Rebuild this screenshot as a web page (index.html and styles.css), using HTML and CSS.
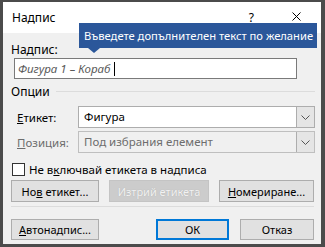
FILE: index.html
```html
<!DOCTYPE html>
<html lang="bg">

<head>
    <meta charset="UTF-8">
    <meta name="viewport" content="width=device-width, initial-scale=1.0">
    <title>Надпис</title>

    <link rel="stylesheet" href="styles.css">
</head>

<body>

    <div class="window">

        <div class="titlebar">
            <span class="title">Надпис</span>
            <span class="help">?</span>
            <svg class="close" width="9" height="9" viewBox="0 0 9 9">
                <path d="M0.5 0.5 L8.5 8.5 M8.5 0.5 L0.5 8.5" stroke="#000" stroke-width="1" fill="none" />
            </svg>
        </div>

        <div class="content">
            <div class="caption-label">Надпис:</div>
            <div class="caption-input">
                <span class="caption-text">Фигура 1 – Кораб</span><span class="cursor"></span>
            </div>

            <div class="group">
                <span>Опции</span>
                <div class="group-line"></div>
            </div>

            <div class="field">
                <label><u>Е</u>тикет:</label>
                <div class="select">
                    <span class="value">Фигура</span>
                    <span class="arrow">
                        <svg width="9" height="5" viewBox="0 0 9 5">
                            <path d="M0.5 0.5 L4.5 4.5 L8.5 0.5" stroke="#555" fill="none" />
                        </svg>
                    </span>
                </div>
            </div>

            <div class="field disabled">
                <label><u>П</u>озиция:</label>
                <div class="select">
                    <span class="value">Под избрания елемент</span>
                    <span class="arrow">
                        <svg width="9" height="5" viewBox="0 0 9 5">
                            <path d="M0.5 0.5 L4.5 4.5 L8.5 0.5" stroke="#555" fill="none" />
                        </svg>
                    </span>
                </div>
            </div>

            <div class="check">
                <span class="box"></span>
                <span>Не в<u>к</u>лючвай етикета в надписа</span>
            </div>

            <div class="buttons">
                <button class="btn">Но<u>в</u> етикет...</button>
                <button class="btn off">Изтрий етикета</button>
                <button class="btn wide"><u>Н</u>омериране...</button>
            </div>

            <div class="separator"></div>

            <div class="footer">
                <button class="btn"><u>А</u>втонадпис...</button>
                <div class="spacer"></div>
                <button class="btn ok">ОК</button>
                <button class="btn cancel">Отказ</button>
            </div>
        </div>

        <div class="tooltip">Въведете допълнителен текст по желание</div>

    </div>

</body>

</html>
```

FILE: styles.css
```css
body {
    margin: 0;
    font-family: "Noto Sans", "Open Sans", sans-serif;
    font-size: 11px;
    color: #000;
}

.window {
    position: relative;
    width: 325px;
    height: 247px;
    box-sizing: border-box;
    border-style: solid;
    border-color: #4b4b4b;
    border-width: 2px 4px 3px 3px;
    background-color: #f0f0f0;
}

.titlebar {
    display: flex;
    align-items: center;
    height: 31px;
    padding-left: 9px;
    background-color: #fff;
    font-size: 12px;
}

.title {
    flex: 1;
    margin-top: -1px;
}

.help {
    margin-right: 38px;
    margin-top: -1px;
}

.close {
    margin-right: 20px;
    margin-top: -2px;
}

.content {
    padding: 0 7px 0 8px;
}

.caption-label {
    margin-top: 9px;
    height: 16px;
    line-height: 16px;
    font-size: 12px;
}

.caption-input {
    display: flex;
    align-items: center;
    margin: 0 17px 0 3px;
    height: 21px;
    box-sizing: border-box;
    border: 1px solid #7a7a7a;
    background-color: #fff;
    padding-left: 3px;
}

.caption-text {
    font-style: italic;
    color: #5a5a5a;
    font-size: 11.5px;
}

.cursor {
    width: 1px;
    height: 14px;
    margin-left: 4px;
    background-color: #000;
}

.group {
    display: flex;
    align-items: center;
    margin-top: 4px;
    height: 16px;
    font-size: 12px;
}

.group-line {
    flex: 1;
    height: 1px;
    margin-left: 6px;
    margin-right: -1px;
    background-color: #dcdcdc;
}

.field {
    display: flex;
    align-items: center;
    margin-top: 7px;
    margin-right: -1px;
    padding-left: 6px;
    font-size: 11.5px;
}

.field + .field {
    margin-top: 3px;
}

.field label {
    width: 61px;
}

.select {
    flex: 1;
    display: flex;
    height: 22px;
    box-sizing: border-box;
    border: 1px solid #adadad;
    background-color: #fff;
}

.select .value {
    flex: 1;
    line-height: 20px;
    padding-left: 5px;
}

.select .arrow {
    display: flex;
    align-items: center;
    justify-content: center;
    width: 17px;
    border-left: 1px solid #adadad;
    background-color: #e5e5e5;
}

.disabled label,
.disabled .value {
    color: #6d6d6d;
}

.disabled .select {
    background-color: #f0f0f0;
    border-color: #bfbfbf;
}

.check {
    display: flex;
    align-items: center;
    margin-top: 10px;
    height: 12px;
    padding-left: 1px;
    font-size: 11.5px;
}

.box {
    width: 11px;
    height: 11px;
    border: 1px solid #333;
    background-color: #fff;
    margin-right: 4px;
}

.buttons {
    display: flex;
    margin-top: 5px;
}

.btn {
    height: 22px;
    box-sizing: border-box;
    border: 1px solid #adadad;
    background-color: #e1e1e1;
    font-family: inherit;
    font-size: 11px;
    color: #000;
    padding: 0;
    white-space: nowrap;
}

.buttons .btn {
    width: 88px;
}

.buttons .btn.off {
    width: 100px;
    margin-left: 10px;
    background-color: #cccccc;
    border-color: #c4c4c4;
    color: #f2f2f2;
    text-shadow: 0 0 1px #a8a8a8;
}

.buttons .btn.wide {
    width: 95px;
    margin-left: 10px;
}

.separator {
    height: 1px;
    margin-top: 4px;
    background-color: #dcdcdc;
}

.footer {
    display: flex;
    margin-top: 12px;
}

.footer .btn {
    width: 88px;
    height: 21px;
}

.spacer {
    flex: 1;
}

.footer .ok {
    width: 73px;
    border: 2px solid #0078d7;
}

.footer .cancel {
    width: 74px;
    margin-left: 11px;
}

.tooltip {
    position: absolute;
    left: 76px;
    top: 21px;
    width: 238px;
    height: 25px;
    box-sizing: border-box;
    padding-left: 5px;
    line-height: 25px;
    font-size: 11.2px;
    background-color: #2b579a;
    color: #fff;
    white-space: nowrap;
}

.tooltip::after {
    content: "";
    position: absolute;
    left: 9px;
    top: 25px;
    border-style: solid;
    border-width: 5px 6px 0 6px;
    border-color: #2b579a transparent transparent transparent;
}
```
